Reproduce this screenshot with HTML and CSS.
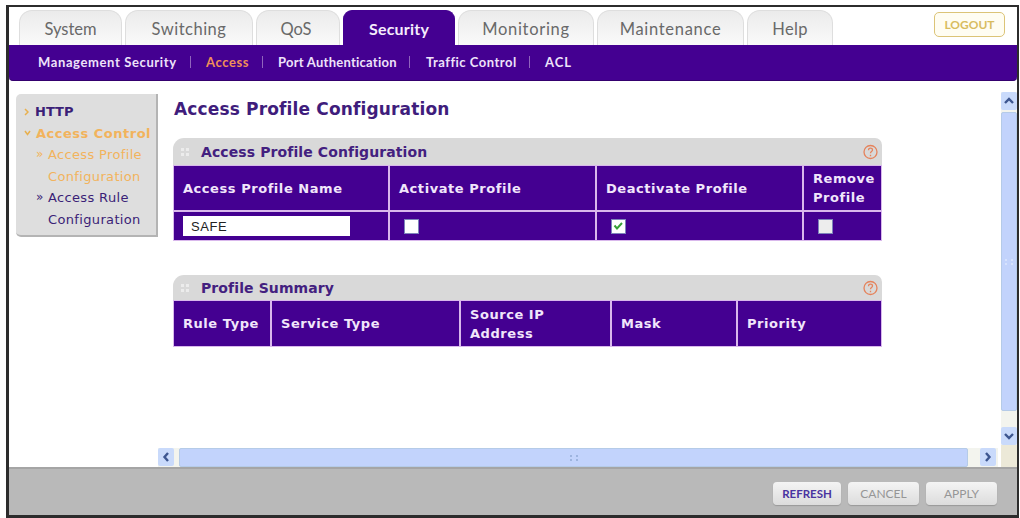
FILE: index.html
```html
<!DOCTYPE html>
<html lang="en">
<head>
  <meta charset="UTF-8">
  <title>Access Profile Configuration</title>
  <link rel="stylesheet" href="styles.css">
</head>
<body>
  <div class="window">
    <header class="header">
      <nav class="tabs">
        <a class="tab system"><span>System</span></a>
        <a class="tab switching"><span>Switching</span></a>
        <a class="tab qos"><span>QoS</span></a>
        <a class="tab security active"><span>Security</span></a>
        <a class="tab monitoring"><span>Monitoring</span></a>
        <a class="tab maintenance"><span>Maintenance</span></a>
        <a class="tab help"><span>Help</span></a>
      </nav>
      <button class="logout">LOGOUT</button>
    </header>

    <nav class="subnav">
      <a class="s-mgmt">Management Security</a><i></i>
      <a class="s-access current">Access</a><i></i>
      <a class="s-port">Port Authentication</a><i></i>
      <a class="s-traffic">Traffic Control</a><i></i>
      <a class="s-acl">ACL</a>
    </nav>

    <div class="body">
      <aside class="sidebar">
        <div class="side-item http"><svg width="5" height="8" viewBox="0 0 5 8"><path d="M1 1l3 3-3 3"/></svg><b>HTTP</b></div>
        <div class="side-item control orange"><svg width="7" height="6" viewBox="0 0 7 6"><path d="M1 1l2.5 3.5L6 1"/></svg><b>Access Control</b></div>
        <div class="side-sub orange"><em>»</em><span>Access Profile<br>Configuration</span></div>
        <div class="side-sub"><em>»</em><span>Access Rule<br>Configuration</span></div>
      </aside>

      <main class="content">
        <h1>Access Profile Configuration</h1>

        <section class="panel">
          <div class="panel-head">
            <svg class="dots" width="8" height="10" viewBox="0 0 8 10"><path d="M0 1h3v3H0zM5 1h3v3H5zM0 6h3v3H0zM5 6h3v3H5z"/></svg>
            <h2>Access Profile Configuration</h2>
            <svg class="hint" width="17" height="16" viewBox="0 0 17 16"><circle cx="8.5" cy="8" r="6.5"/><path d="M6.5 6.2c0-2.7 4-2.7 4-.2 0 1.600-2 1.500-2 3.200M8.500 10.800v1.400"/></svg>
          </div>
          <div class="grid profile-grid">
            <div class="cell th">Access Profile Name</div>
            <div class="cell th">Activate Profile</div>
            <div class="cell th">Deactivate Profile</div>
            <div class="cell th">Remove<br>Profile</div>
            <div class="cell td"><div class="field">SAFE</div></div>
            <div class="cell td"><span class="check"></span></div>
            <div class="cell td"><span class="check"><svg width="11" height="10" viewBox="0 0 11 10"><path d="M1.5 4.500l2.500 3 5-5.500"/></svg></span></div>
            <div class="cell td"><span class="check off"></span></div>
          </div>
        </section>

        <section class="panel summary">
          <div class="panel-head">
            <svg class="dots" width="8" height="10" viewBox="0 0 8 10"><path d="M0 1h3v3H0zM5 1h3v3H5zM0 6h3v3H0zM5 6h3v3H5z"/></svg>
            <h2>Profile Summary</h2>
            <svg class="hint" width="17" height="16" viewBox="0 0 17 16"><circle cx="8.5" cy="8" r="6.5"/><path d="M6.5 6.2c0-2.7 4-2.7 4-.2 0 1.600-2 1.500-2 3.200M8.500 10.800v1.400"/></svg>
          </div>
          <div class="grid summary-grid">
            <div class="cell th">Rule Type</div>
            <div class="cell th">Service Type</div>
            <div class="cell th">Source IP<br>Address</div>
            <div class="cell th">Mask</div>
            <div class="cell th">Priority</div>
          </div>
        </section>

        <div class="hscroll">
          <span class="arrow"><svg width="8" height="10" viewBox="0 0 8 10"><path d="M6 1L2.500 5 6 9"/></svg></span>
          <span class="thumb"><i class="grip"></i></span>
          <span class="arrow right"><svg width="8" height="10" viewBox="0 0 8 10"><path d="M2 1l3.500 4L2 9"/></svg></span>
        </div>
      </main>

      <div class="vscroll">
        <span class="arrow"><svg width="10" height="8" viewBox="0 0 10 8"><path d="M1 6l4-4 4 4"/></svg></span>
        <span class="thumb"><i class="grip"></i></span>
        <span class="arrow"><svg width="10" height="8" viewBox="0 0 10 8"><path d="M1 2l4 4 4-4"/></svg></span>
        <span class="corner"></span>
      </div>
    </div>

    <footer class="footer">
      <button class="btn refresh">REFRESH</button>
      <button class="btn cancel">CANCEL</button>
      <button class="btn apply">APPLY</button>
    </footer>
  </div>
</body>
</html>
```
FILE: styles.css
```css
:root {
  --purple: #440091;
  --orange: #f2b35c;
  --gray: #d9d9d9;
  --line: #d9b8ec;
}

* {
  box-sizing: border-box;
}

body {
  margin: 0;
  padding: 5px 1px 0 6px;
  width: 1020px;
  height: 518px;
  overflow: hidden;
  background: #fff;
  font-family: "DejaVu Sans", sans-serif;
}

.window {
  height: 513px;
  border: solid #2c2c2c;
  border-width: 2px 2px 3px 3px;
  display: flex;
  flex-direction: column;
}

/* --- tabs --- */
.header {
  height: 38px;
  display: flex;
  justify-content: space-between;
  padding: 3px 12px 0 10px;
}
.tabs {
  display: flex;
  font-family: Lato, sans-serif;
  font-size: 16.5px;
  color: #696969;
}
.tab {
  height: 35px;
  margin-right: 3px;
  border: 1px solid #dedede;
  border-bottom: 0;
  border-radius: 13px 13px 0 0;
  background: linear-gradient(#ebebeb, #fafafa);
  text-align: center;
  line-height: 36px;
  white-space: nowrap;
}
.tab.active {
  background: var(--purple);
  border-color: var(--purple);
  border-radius: 9px 9px 0 0;
  color: #f5ecfc;
  font-weight: bold;
}
.system { width: 103px; }
.switching { width: 128px; letter-spacing: .5px; }
.qos { width: 84px; padding-right: 4px; }
.security { width: 112px; font-size: 16px; letter-spacing: .2px; }
.monitoring { width: 136px; letter-spacing: .7px; }
.maintenance { width: 147px; letter-spacing: .7px; }
.help { width: 86px; letter-spacing: .3px; }

.logout {
  width: 71px;
  height: 25px;
  margin-top: 2px;
  padding: 0;
  border: 1px solid #dcc477;
  border-radius: 5px;
  background: #fffdf2;
  color: #d8bc60;
  font: bold 12px Lato, sans-serif;
}

/* --- second level menu --- */
.subnav {
  height: 36px;
  display: flex;
  align-items: center;
  padding: 0 0 1px 29px;
  background: var(--purple);
  border-bottom: 1px solid #34006e;
  border-radius: 0 0 4px 4px;
  color: #eee2fa;
  font: bold 13px Lato, sans-serif;
  white-space: nowrap;
}
.subnav i {
  width: 1px;
  height: 12px;
  background: #9064bd;
}
.s-mgmt { width: 152px; letter-spacing: .62px; }
.subnav .current { width: 71px; padding-left: 15px; color: #f09058; letter-spacing: .6px; }
.s-port { width: 146px; padding-left: 15px; letter-spacing: .25px; }
.s-traffic { width: 119px; padding-left: 16px; letter-spacing: .5px; }
.s-acl { padding-left: 15px; letter-spacing: 1px; }

.body {
  flex: 1;
  display: flex;
  min-height: 0;
}

/* --- left menu --- */
.sidebar {
  width: 142px;
  height: 143px;
  margin: 13px 0 0 7px;
  padding: 7px 0 0 8px;
  background: #dedede;
  border-right: 2px solid #b4b4b4;
  border-bottom: 2px solid #b4b4b4;
  border-radius: 5px 0 0 5px;
  color: #3b1f77;
  font-size: 13px;
  line-height: 21.5px;
  white-space: nowrap;
}
.sidebar svg {
  fill: none;
  stroke: #e8b04e;
  stroke-width: 1.5;
}
.side-item {
  display: flex;
  align-items: center;
}
.side-item b {
  margin-left: 6px;
}
.control b {
  margin-left: 5px;
  letter-spacing: .5px;
}
.side-sub {
  display: flex;
  padding-left: 12px;
  letter-spacing: .35px;
}
.side-sub em {
  width: 12px;
  font-style: normal;
  font-size: 12px;
}
.orange {
  color: var(--orange);
}

/* --- content --- */
.content {
  width: 840px;
  padding: 13px 0 0 16px;
  display: flex;
  flex-direction: column;
}
h1 {
  margin: 0 0 14px;
  color: #3f1d7c;
  font-size: 17px;
  font-weight: bold;
  letter-spacing: .15px;
  line-height: 30px;
  white-space: nowrap;
}
.panel {
  width: 709px;
  margin-left: -1px;
}
.panel-head {
  height: 27px;
  display: flex;
  align-items: center;
  padding: 0 3px 0 8px;
  background: var(--gray);
  border-radius: 11px 7px 0 0;
}
.dots {
  fill: #ececec;
}
.panel-head h2 {
  margin: 0 auto 0 12px;
  color: #43207f;
  font-size: 14px;
  letter-spacing: .1px;
  white-space: nowrap;
}
.hint {
  fill: none;
  stroke: #e5835c;
  stroke-width: 1.3;
}
.summary {
  margin-top: 34px;
}
.summary .panel-head {
  height: 25px;
}
.grid {
  display: grid;
  gap: 2px;
  padding: 1px;
  background: var(--line);
}
.profile-grid {
  grid-template-columns: 214px 205px 205px 1fr;
  grid-template-rows: 44px 28px;
}
.summary-grid {
  grid-template-columns: 96px 187px 149px 124px 1fr;
  grid-template-rows: 45px;
}
.cell {
  display: flex;
  align-items: center;
  padding-left: 9px;
  background: var(--purple);
  color: #f1e6fb;
  font-size: 13px;
  font-weight: bold;
  letter-spacing: .55px;
  line-height: 19px;
  white-space: nowrap;
}
.field {
  width: 167px;
  height: 20px;
  padding-left: 8px;
  background: #fff;
  color: #222;
  font: 13px/21px "Liberation Sans", sans-serif;
}
.check {
  width: 15px;
  height: 15px;
  margin-left: 5px;
  padding: 1px;
  border: 1px solid #7e84bb;
  background: #fff;
  display: flex;
}
.check.off {
  background: #ededed;
}
.check svg {
  fill: none;
  stroke: #37a037;
  stroke-width: 2;
}

/* --- scrollbars --- */
.hscroll {
  height: 19px;
  margin: auto 0 0 -16px;
  padding-right: 2px;
  display: flex;
  gap: 5px;
  background: #f3f4ee;
}
.arrow {
  flex: none;
  width: 16px;
  height: 18px;
  display: flex;
  align-items: center;
  justify-content: center;
  background: #c9dafb;
  border-radius: 2px;
}
.arrow svg {
  fill: none;
  stroke: #3d5690;
  stroke-width: 2.4;
}
.thumb {
  display: flex;
  align-items: center;
  justify-content: center;
  background: #c2d3fc;
  border: 1px solid #b5cbe8;
  border-radius: 2px;
}
.hscroll .thumb {
  width: 789px;
}
.hscroll .right {
  margin-left: auto;
}
.grip {
  width: 8px;
  height: 6px;
  border-left: 2px dotted #9db4df;
  border-right: 2px dotted #9db4df;
}
.vscroll {
  width: 16px;
  margin: 11px 0 0 auto;
  display: flex;
  flex-direction: column;
  background: #f3f4ee;
}
.vscroll .thumb {
  height: 299px;
  margin: 2px 0 auto;
}
.vscroll .grip {
  border-color: #d6e2fd;
}
.corner {
  height: 22px;
  background: #ece9d8;
}

/* --- bottom bar --- */
.footer {
  height: 48px;
  display: flex;
  gap: 7px;
  padding: 13px 20px 0 0;
  justify-content: flex-end;
  background: #b9b9b9;
  border-top: 2px solid #a5a5a5;
}
.btn {
  width: 71px;
  height: 23px;
  padding: 0;
  border: 0;
  border-radius: 4px;
  background: linear-gradient(#f4f4f4, #dcdcdc);
  box-shadow: 0 1px 1px #999;
  color: #969696;
  font: 12px Lato, sans-serif;
}
.refresh {
  width: 68px;
  color: #4a34a0;
  font-size: 11.5px;
  font-weight: bold;
}
```
